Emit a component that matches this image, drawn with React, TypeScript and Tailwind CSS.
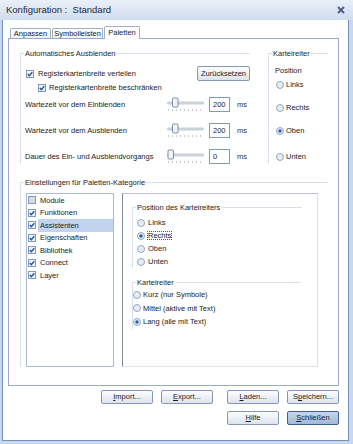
import type { ReactNode } from "react";

function CheckBox({ checked = true }: { checked?: boolean }) {
  return (
    <svg width="8" height="8" viewBox="0 0 8 8" className="shrink-0">
      <rect x="0.5" y="0.5" width="7" height="7" fill={checked ? "#f2f5f9" : "#dadcdf"} stroke="#8299b6" />
      {checked && <path d="M1.8 4.1 L3.3 5.7 L6.3 2.2" fill="none" stroke="#1f52a6" strokeWidth="1.4" />}
    </svg>
  );
}

function Radio({ on = false }: { on?: boolean }) {
  return (
    <svg width="8" height="8" viewBox="0 0 8 8" className="shrink-0">
      <circle cx="4" cy="4" r="3.5" fill="#e8edf3" stroke="#91a5bf" />
      {on && <circle cx="4" cy="4" r="1.7" fill="#2c5db2" />}
    </svg>
  );
}

function Slider({ pos }: { pos: number }) {
  return (
    <svg width="40" height="15" viewBox="0 0 40 15" className="shrink-0">
      <rect x="0.5" y="5" width="36" height="2" rx="1" fill="#dfe3e8" stroke="#a3adba" strokeWidth="0.6" />
      <rect x={pos + 0.5} y="1" width="5.5" height="9" rx="1" fill="#f1f4f8" stroke="#7d8fa8" />
      {[1, 5, 9, 13, 17, 21, 25, 29, 33].map((t) => (
        <rect key={t} x={t} y="12.5" width="1" height="1" fill="#8d99a8" />
      ))}
    </svg>
  );
}

function Group({ title, className, children }: { title: string; className: string; children: ReactNode }) {
  return (
    <div className={`border-l border-t border-[#dae1ea] ${className}`}>
      <div className="-mt-[5px] ml-[3px] h-[9px] w-fit bg-white px-px leading-[9px]">{title}</div>
      {children}
    </div>
  );
}

function SliderRow({ label, value, pos, className }: { label: string; value: string; pos: number; className: string }) {
  return (
    <div className={`flex h-[15px] items-center pl-[4px] ${className}`}>
      <span className="w-[142px]">{label}</span>
      <Slider pos={pos} />
      <div className="ml-[2px] flex h-[15px] w-[21px] items-center border border-[#7f9db9] pl-[3px]">{value}</div>
      <span className="ml-[7px] text-[#333]">ms</span>
    </div>
  );
}

function Btn({ children, primary = false, className = "" }: { children: ReactNode; primary?: boolean; className?: string }) {
  return (
    <div
      className={`flex h-[14px] w-[52px] items-center justify-center rounded-[2px] border ${
        primary
          ? "border-[#40618f] bg-linear-to-b from-[#c6d6ec] to-[#a2b9da]"
          : "border-[#8498b3] bg-linear-to-b from-[#fdfdfe] to-[#dce3ed]"
      } ${className}`}
    >
      {children}
    </div>
  );
}

const categories = [
  { name: "Module", checked: false },
  { name: "Funktionen", checked: true },
  { name: "Assistenten", checked: true, selected: true },
  { name: "Eigenschaften", checked: true },
  { name: "Bibliothek", checked: true },
  { name: "Connect", checked: true },
  { name: "Layer", checked: true },
];

export default function App() {
  return (
    <div className="flex h-[444px] w-[353px] flex-col overflow-hidden bg-[#c9d8ec] font-['Liberation_Sans',Arial,sans-serif] text-[7.5px] leading-none text-[#1c1c1c]">
      <div className="flex h-[20px] shrink-0 items-center justify-between bg-linear-to-b from-[#e9f0f8] to-[#d0ddef] pl-[6px] pr-[8px]">
        <span className="text-[9.5px] text-[#1d2838]">Konfiguration :&nbsp; Standard</span>
        <svg width="8" height="8" viewBox="0 0 8 8">
          <path d="M1 1 L7 7 M7 1 L1 7" stroke="#4b6082" strokeWidth="2" />
        </svg>
      </div>

      <div className="mb-[3px] ml-[2px] mr-[4px] flex flex-1 flex-col border-b border-l border-r border-[#7391bb] bg-white pl-[5px] pr-[9px]">
        {/* tabs */}
        <div className="mt-[6px] flex h-[12px] items-end gap-[1px] pl-[2px]">
          <div className="flex h-[10px] w-[41px] items-center justify-center rounded-t-[2px] border border-b-0 border-[#9fb0c6] bg-linear-to-b from-white to-[#edf1f5]">
            Anpassen
          </div>
          <div className="flex h-[10px] w-[51px] items-center justify-center rounded-t-[2px] border border-b-0 border-[#9fb0c6] bg-linear-to-b from-white to-[#edf1f5]">
            Symbolleisten
          </div>
          <div className="relative z-10 -mb-px flex h-[13px] w-[36px] items-center justify-center rounded-t-[2px] border border-b-0 border-[#9fb0c6] bg-white pb-px">
            Paletten
          </div>
        </div>

        {/* tab panel */}
        <div className="flex h-[348px] flex-col border border-[#99abc4] pl-[11px] pt-[14px]">
          <div className="flex gap-[18px]">
            <Group title="Automatisches Ausblenden" className="w-[230px]">
              <div className="mt-[8px] flex h-[15px] items-center pl-[5px]">
                <CheckBox />
                <span className="ml-[4px]">Registerkartenbreite verteilen</span>
                <Btn className="ml-auto w-[53px] h-[15px]">Zurücksetzen</Btn>
              </div>
              <div className="mt-px flex h-[12px] items-center pl-[17px]">
                <CheckBox />
                <span className="ml-[3px]">Registerkartenbreite beschränken</span>
              </div>
              <SliderRow className="mt-[3px]" label="Wartezeit vor dem Einblenden" value="200" pos={5} />
              <SliderRow className="mt-[11px]" label="Wartezeit vor dem Ausblenden" value="200" pos={5} />
              <SliderRow className="mt-[11px]" label="Dauer des Ein- und Ausblendvorgangs" value="0" pos={0.5} />
            </Group>

            <Group title="Karteireiter" className="w-[60px]">
              <div className="mt-[8px] flex h-[10px] items-center pl-[6px]">Position</div>
              <div className="mt-[4px] flex h-[10px] items-center gap-[2px] pl-[7px]">
                <Radio />
                <span>Links</span>
              </div>
              <div className="mt-[13px] flex h-[10px] items-center gap-[2px] pl-[7px]">
                <Radio />
                <span>Rechts</span>
              </div>
              <div className="mt-[13px] flex h-[10px] items-center gap-[2px] pl-[7px]">
                <Radio on />
                <span>Oben</span>
              </div>
              <div className="mt-[16px] flex h-[10px] items-center gap-[2px] pl-[7px]">
                <Radio />
                <span>Unten</span>
              </div>
            </Group>
          </div>

          <Group title="Einstellungen für Paletten-Kategorie" className="mt-[18px] w-[308px]">
            <div className="mt-[6px] flex gap-[8px] pl-[5px]">
              <div className="h-[174px] w-[88px] border border-[#a9bbd2]">
                {categories.map((c) => (
                  <div key={c.name} className="flex h-[12.5px] items-center pl-px">
                    <CheckBox checked={c.checked} />
                    <span
                      className={`ml-[2px] flex h-full flex-1 items-center pl-[2px] ${c.selected ? "bg-[#c2d3ef]" : ""}`}
                    >
                      {c.name}
                    </span>
                  </div>
                ))}
              </div>

              <div className="h-[174px] w-[196px] border border-[#dfe3e8] border-l-[#7f8a99] border-t-[#bcc5d1]">
                <Group title="Position des Karteireiters" className="ml-[9px] mt-[13px] w-[170px]">
                  <div className="mt-[4px] pl-[4px]">
                    <div className="flex h-[13px] items-center gap-[3px]">
                      <Radio />
                      <span>Links</span>
                    </div>
                    <div className="flex h-[13px] items-center gap-[3px]">
                      <Radio on />
                      <span className="outline-1 outline-dotted outline-[#555]">Rechts</span>
                    </div>
                    <div className="flex h-[13px] items-center gap-[3px]">
                      <Radio />
                      <span>Oben</span>
                    </div>
                    <div className="flex h-[13px] items-center gap-[3px]">
                      <Radio />
                      <span>Unten</span>
                    </div>
                  </div>
                </Group>

                <Group title="Karteireiter" className="ml-[9px] mt-[14px] w-[169px]">
                  <div className="mt-px">
                    <div className="flex h-[13.5px] items-center gap-[2px]">
                      <Radio />
                      <span>Kurz (nur Symbole)</span>
                    </div>
                    <div className="flex h-[13.5px] items-center gap-[2px]">
                      <Radio />
                      <span>Mittel (aktive mit Text)</span>
                    </div>
                    <div className="flex h-[13.5px] items-center gap-[2px]">
                      <Radio on />
                      <span>Lang (alle mit Text)</span>
                    </div>
                  </div>
                </Group>
              </div>
            </div>
          </Group>
        </div>

        {/* buttons */}
        <div className="mt-[4px] flex justify-end">
          <Btn>
            <span className="underline">I</span>mport...
          </Btn>
          <Btn className="ml-[8px]">
            <span className="underline">E</span>xport...
          </Btn>
          <Btn className="ml-[14px]">
            <span className="underline">L</span>aden...
          </Btn>
          <Btn className="ml-[8px]">
            S<span className="underline">p</span>eichern...
          </Btn>
        </div>
        <div className="mt-[7px] flex justify-end">
          <Btn>
            <span className="underline">H</span>ilfe
          </Btn>
          <Btn primary className="ml-[8px]">
            <span className="underline">S</span>chließen
          </Btn>
        </div>
      </div>
    </div>
  );
}
